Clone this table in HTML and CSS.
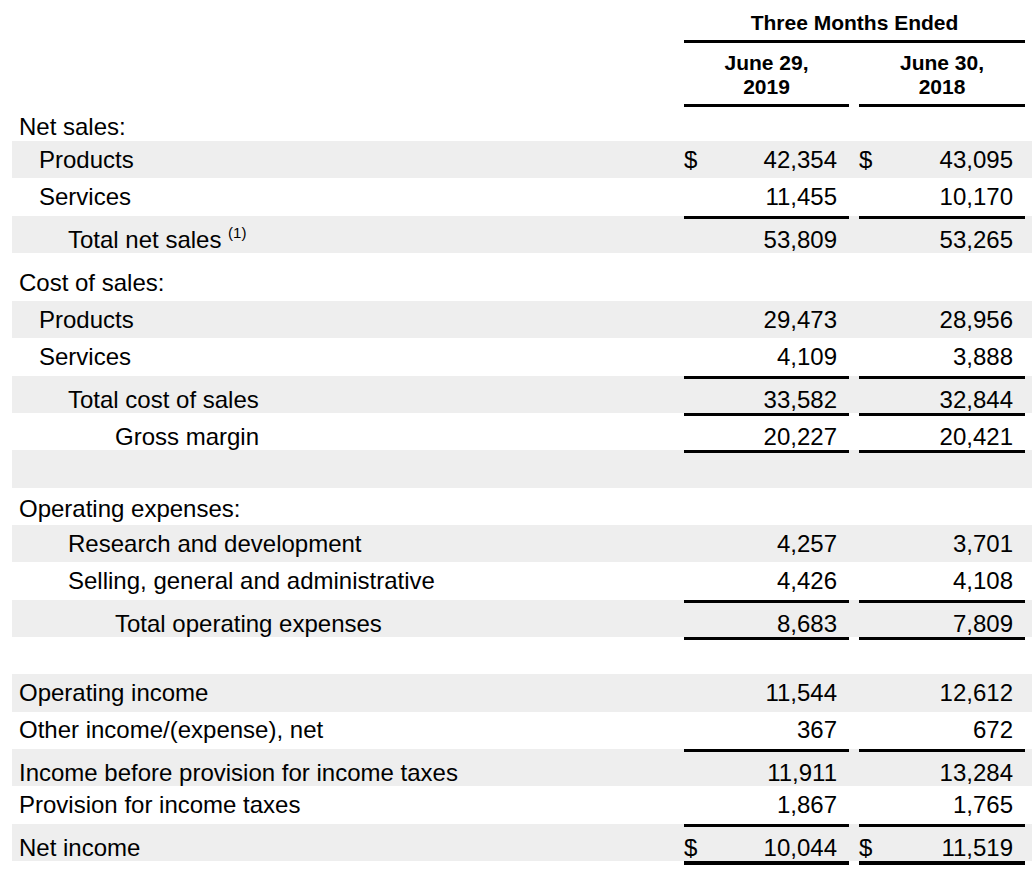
FILE: index.html
```html
<!DOCTYPE html>
<html>
<head>
<meta charset="utf-8">
<link rel="stylesheet" href="styles.css">
</head>
<body>
<div class="sheet">
  <div class="row hd1">
    <div class="cell span">Three Months Ended</div>
  </div>
  <div class="row hd2">
    <div class="cell c1 date">June 29,<br>2019</div>
    <div class="cell c2 date">June 30,<br>2018</div>
  </div>

  <div class="row head first"><div class="cell label i0">Net sales:</div></div>
  <div class="row band"><div class="cell label i1">Products</div><div class="cell c1 amt"><span>$</span><span>42,354</span></div><div class="cell c2 amt"><span>$</span><span>43,095</span></div></div>
  <div class="row"><div class="cell label i1">Services</div><div class="cell c1 amt"><span></span><span>11,455</span></div><div class="cell c2 amt"><span></span><span>10,170</span></div></div>
  <div class="row band ul"><div class="cell label i2"><span>Total net sales <sup class="note">(1)</sup></span></div><div class="cell c1 amt"><span></span><span>53,809</span></div><div class="cell c2 amt"><span></span><span>53,265</span></div></div>

  <div class="row head tall"><div class="cell label i0">Cost of sales:</div></div>
  <div class="row band"><div class="cell label i1">Products</div><div class="cell c1 amt"><span></span><span>29,473</span></div><div class="cell c2 amt"><span></span><span>28,956</span></div></div>
  <div class="row"><div class="cell label i1">Services</div><div class="cell c1 amt"><span></span><span>4,109</span></div><div class="cell c2 amt"><span></span><span>3,888</span></div></div>
  <div class="row band ul"><div class="cell label i2">Total cost of sales</div><div class="cell c1 amt"><span></span><span>33,582</span></div><div class="cell c2 amt"><span></span><span>32,844</span></div></div>
  <div class="row ul"><div class="cell label i3">Gross margin</div><div class="cell c1 amt"><span></span><span>20,227</span></div><div class="cell c2 amt"><span></span><span>20,421</span></div></div>
  <div class="row band ul line-only"><div class="cell label"></div><div class="cell c1 amt"></div><div class="cell c2 amt"></div></div>

  <div class="row head"><div class="cell label i0">Operating expenses:</div></div>
  <div class="row band"><div class="cell label i2">Research and development</div><div class="cell c1 amt"><span></span><span>4,257</span></div><div class="cell c2 amt"><span></span><span>3,701</span></div></div>
  <div class="row"><div class="cell label i2">Selling, general and administrative</div><div class="cell c1 amt"><span></span><span>4,426</span></div><div class="cell c2 amt"><span></span><span>4,108</span></div></div>
  <div class="row band ul"><div class="cell label i3">Total operating expenses</div><div class="cell c1 amt"><span></span><span>8,683</span></div><div class="cell c2 amt"><span></span><span>7,809</span></div></div>
  <div class="row ul line-only"><div class="cell label"></div><div class="cell c1 amt"></div><div class="cell c2 amt"></div></div>

  <div class="row band"><div class="cell label i0">Operating income</div><div class="cell c1 amt"><span></span><span>11,544</span></div><div class="cell c2 amt"><span></span><span>12,612</span></div></div>
  <div class="row"><div class="cell label i0">Other income/(expense), net</div><div class="cell c1 amt"><span></span><span>367</span></div><div class="cell c2 amt"><span></span><span>672</span></div></div>
  <div class="row band ul"><div class="cell label i0">Income before provision for income taxes</div><div class="cell c1 amt"><span></span><span>11,911</span></div><div class="cell c2 amt"><span></span><span>13,284</span></div></div>
  <div class="row"><div class="cell label i0">Provision for income taxes</div><div class="cell c1 amt"><span></span><span>1,867</span></div><div class="cell c2 amt"><span></span><span>1,765</span></div></div>
  <div class="row band ul"><div class="cell label i0">Net income</div><div class="cell c1 amt"><span>$</span><span>10,044</span></div><div class="cell c2 amt"><span>$</span><span>11,519</span></div></div>
  <div class="row rule"><div class="cell c1 bar"></div><div class="cell c2 bar"></div></div>
</div>
</body>
</html>
```

FILE: styles.css
```css
* { box-sizing: border-box; }

body {
  margin: 0;
  font-family: "Liberation Sans", Arial, Helvetica, sans-serif;
  color: #000;
  background: #fff;
}

.sheet {
  padding-left: 12px;
}

.row {
  display: grid;
  grid-template-columns: 672px 165px 10px 166px 7px;
  height: 37.33px;
}

.row.band { background: #eeeeee; }

.cell {
  display: flex;
  align-items: center;
  font-size: 24px;
  white-space: nowrap;
}

.label { grid-column: 1; }
.c1 { grid-column: 2; }
.c2 { grid-column: 4; }

.i0 { padding-left: 7px; }
.i1 { padding-left: 27px; }
.i2 { padding-left: 56px; }
.i3 { padding-left: 103px; }

.amt {
  justify-content: space-between;
  padding-right: 12px;
  padding-left: 0;
}

.note {
  font-size: 15px;
  vertical-align: 10px;
  line-height: 0;
}

/* rows whose amounts sit under a rule */
.row.ul .cell { padding-top: 10px; }
.row.ul .amt {
  border-top: 3px solid #000;
  padding-top: 7px;
}
.row.line-only .cell { padding-top: 0; }

/* section headings */
.row.head .cell { padding-top: 6px; }
.row.head.first { height: 34px; }
.row.head.tall { height: 48px; }
.row.head.tall .cell { padding-top: 12px; }

/* header */
.hd1 { height: 43px; }
.hd1 .span {
  grid-column: 2 / 5;
  justify-content: center;
  font-size: 21px;
  font-weight: bold;
  padding-top: 6px;
  border-bottom: 3px solid #000;
}

.hd2 { height: 64px; }
.hd2 .date {
  justify-content: center;
  text-align: center;
  font-size: 21px;
  font-weight: bold;
  line-height: 24px;
  border-bottom: 3px solid #000;
  padding-top: 2px;
}

.row.rule { height: 4px; }
.bar { background: #000; }
```
